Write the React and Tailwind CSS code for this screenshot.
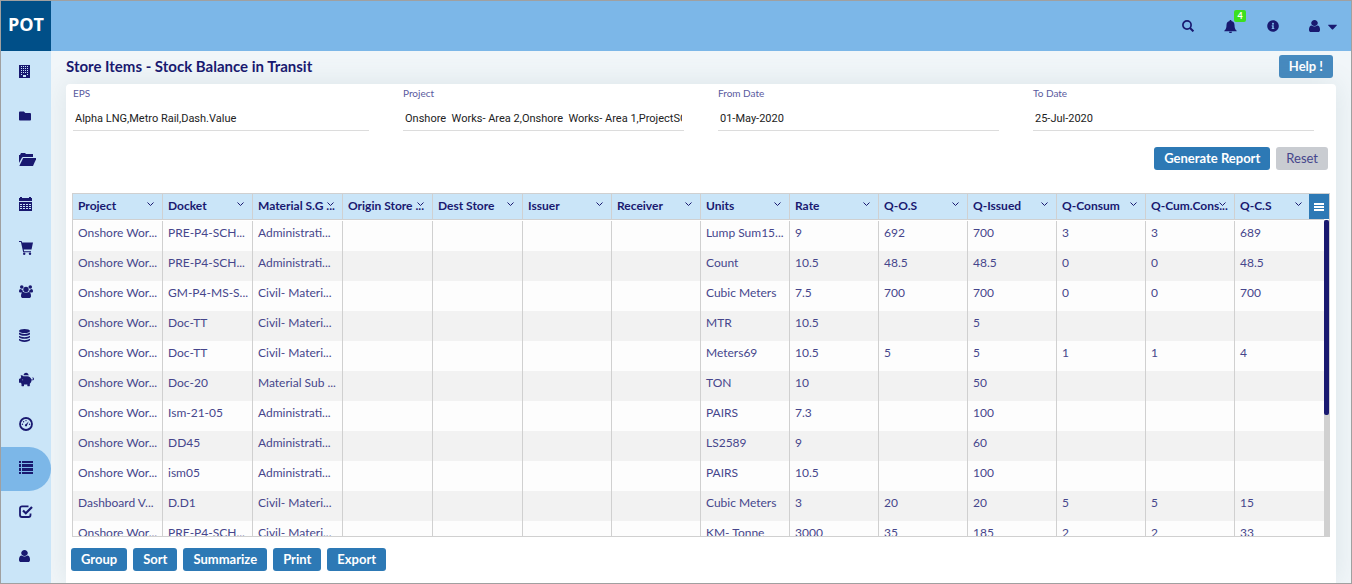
import React from "react";
import { FaInfoCircle, FaCaretDown, FaFolder, FaPiggyBank } from "react-icons/fa";

const BuildingIcon = () => (
  <svg viewBox="0 0 11 13" className="h-[13px] w-[11px]" fill="currentColor" shapeRendering="crispEdges">
    <path fillRule="evenodd" d="M0 0h11v13H0zM2 1v1h1V1zM4 1v1h1V1zM6 1v1h1V1zM8 1v1h1V1zM2 3v1h1V3zM4 3v1h1V3zM6 3v1h1V3zM8 3v1h1V3zM2 5v1h1V5zM4 5v1h1V5zM6 5v1h1V5zM8 5v1h1V5zM2 7v1h1V7zM4 7v1h1V7zM6 7v1h1V7zM8 7v1h1V7zM2 9v1h1V9zM8 9v1h1V9zM4 10v2h3v-2z" />
  </svg>
);

const FolderOpenIcon = () => (
  <svg viewBox="0 0 17 13" className="h-[13px] w-[17px]" fill="currentColor">
    <path d="M0 10V2h1l1-2h4l1 1h7v3H4L3 4.500z" />
    <path d="M4.200 5H17.500L14 13H.3z" />
  </svg>
);

const CalendarIcon = () => (
  <svg viewBox="0 0 13 14" className="h-[14px] w-[13px]" fill="currentColor" shapeRendering="crispEdges">
    <path fillRule="evenodd" d="M0 1h1V0h2v1h7V0h2v1h1v3H0zM0 5h13v9H0zM1 7v1h2V7zM4 7v1h2V7zM7 7v1h2V7zM10 7v1h2V7zM1 9v1h2V9zM4 9v1h2V9zM7 9v1h2V9zM10 9v1h2V9zM1 11v1h2v-1zM4 11v1h2v-1zM7 11v1h2v-1zM10 11v1h2v-1z" />
  </svg>
);

const CartIcon = () => (
  <svg viewBox="0 0 14 14" className="h-[14px] w-[14px]" fill="currentColor">
    <path d="M0 0h2.600l.5 1.500H14L12.500 8.500H4.700l.4 1.700H12v1H4.200L1.900 1H0z" />
    <circle cx="5.200" cy="12.700" r="1.200" />
    <circle cx="11" cy="12.700" r="1.200" />
  </svg>
);

const GroupIcon = () => (
  <svg viewBox="0 0 28 26" className="h-[13px] w-[14px]" fill="currentColor">
    <circle cx="5.500" cy="4" r="3.600" />
    <circle cx="22.500" cy="4" r="3.600" />
    <circle cx="14" cy="9" r="5.400" />
    <path d="M0 13c0-3 1-5 3-5l4 2c0 2 .5 3.500 2 5H3c-2 0-3-1-3-2zM28 13c0-3-1-5-3-5l-4 2c0 2-.5 3.500-2 5h6c2 0 3-1 3-2zM4 22c0-5 2-8 5-8 3 2 7 2 10 0 3 0 5 3 5 8 0 3-2 4-4 4H8c-2 0-4-1-4-4z" />
  </svg>
);

const DatabaseIcon = () => (
  <svg viewBox="0 0 11 13" className="h-[13px] w-[11px]" fill="currentColor">
    <ellipse cx="5.500" cy="2" rx="5.500" ry="2" />
    <path d="M0 3.600c2 1.900 9 1.900 11 0v1.300c0 2.400-11 2.400-11 0zM0 6.700c2 1.900 9 1.900 11 0V8c0 2.400-11 2.400-11 0zM0 9.800c2 1.900 9 1.900 11 0v1.300c0 2.400-11 2.400-11 0z" />
  </svg>
);

const GaugeIcon = () => (
  <svg viewBox="0 0 14 14" className="h-[14px] w-[14px]" fill="currentColor">
    <circle cx="7" cy="7" r="6" fill="none" stroke="currentColor" strokeWidth="1.800" />
    <path d="M9.800 4.200L7.900 8.600 6.300 7.800z" />
    <circle cx="7" cy="8.300" r="1.100" />
    <circle cx="3.400" cy="7.300" r=".7" />
    <circle cx="4.600" cy="4.700" r=".7" />
    <circle cx="7" cy="3.600" r=".7" />
    <circle cx="10.600" cy="7.300" r=".7" />
  </svg>
);

const ListIcon = () => (
  <svg viewBox="0 0 14 13" className="h-[13px] w-[14px]" fill="currentColor" shapeRendering="crispEdges">
    <path d="M0 0h2v2H0zM3 0h11v2H3zM0 3h2v3H0zM3 3h11v3H3zM0 7h2v3H0zM3 7h11v3H3zM0 11h2v2H0zM3 11h11v2H3z" />
  </svg>
);

const CheckIcon = () => (
  <svg viewBox="0 0 14 13" className="h-[13px] w-[14px]" fill="none" stroke="currentColor">
    <path d="M9.500 1.400H3A2 2 0 0 0 1 3.400V10a2 2 0 0 0 2 2h6.500a2 2 0 0 0 2-2V8.500" strokeWidth="1.800" />
    <path d="M4 5.500l2.800 2.800L13 2" strokeWidth="2.200" />
  </svg>
);

const UserIcon = () => (
  <svg viewBox="0 128 1280 1536" className="h-3 w-[11px]" preserveAspectRatio="none" fill="currentColor">
    <path d="M1280 1399q0 109-62.500 187t-150.500 78h-854q-88 0-150.500-78t-62.500-187q0-85 8.500-160.500t31.500-152 58.500-131 94-89 134.500-34.500q131 128 313 128t313-128q76 0 134.500 34.500t94 89 58.500 131 31.500 152 8.500 160.500zm-256-887q0 159-112.500 271.500t-271.500 112.500-271.500-112.500-112.500-271.500 112.500-271.500 271.500-112.500 271.500 112.500 112.500 271.500z" />
  </svg>
);

const SearchIcon = () => (
  <svg viewBox="0 0 12 12" className="h-3 w-3" fill="none" stroke="currentColor">
    <circle cx="5" cy="5" r="4.100" strokeWidth="1.700" />
    <path d="M8 8l3.400 3.400" strokeWidth="2" />
  </svg>
);

const BellIcon = () => (
  <svg viewBox="0 0 13 13" className="h-[13px] w-[13px]" fill="currentColor">
    <path d="M5.700 0h1.600v1C9.300 1.300 10.500 3 10.500 5c0 3 .7 4.400 2.200 5.700v.6H.3v-.6C1.800 9.400 2.500 8 2.500 5c0-2 1.200-3.700 3.200-4zM5 11.700h3c0 1-.6 1.300-1.500 1.300S5 12.700 5 11.700z" />
  </svg>
);

const MenuIcon = () => (
  <svg viewBox="0 0 10 8" className="h-2 w-[10px]" fill="currentColor" shapeRendering="crispEdges">
    <path d="M0 0h10v2H0zM0 3h10v2H0zM0 6h10v2H0z" />
  </svg>
);

const nav = [
  ["Buildings", <BuildingIcon />],
  ["Folder", <FaFolder size={12} />],
  ["Open folder", <FolderOpenIcon />],
  ["Calendar", <CalendarIcon />],
  ["Cart", <CartIcon />],
  ["Users", <GroupIcon />],
  ["Database", <DatabaseIcon />],
  ["Savings", <FaPiggyBank size={15} className="-scale-x-100" />],
  ["Dashboard", <GaugeIcon />],
  ["Reports", <ListIcon />],
  ["Approvals", <CheckIcon />],
  ["Profile", <UserIcon />],
];

const fields = [
  ["EPS", "Alpha LNG,Metro Rail,Dash.Value"],
  ["Project", "Onshore  Works- Area 2,Onshore  Works- Area 1,ProjectSG"],
  ["From Date", "01-May-2020"],
  ["To Date", "25-Jul-2020"],
];

const columns = [
  "Project", "Docket", "Material S.G ...", "Origin Store ...", "Dest Store", "Issuer", "Receiver",
  "Units", "Rate", "Q-O.S", "Q-Issued", "Q-Consum", "Q-Cum.Cons...", "Q-C.S",
];

const on = "Onshore Wor...";
const adm = "Administrati...";
const civ = "Civil- Materi...";
const rows = [
  [on, "PRE-P4-SCH...", adm, "", "", "", "", "Lump Sum15...", "9", "692", "700", "3", "3", "689"],
  [on, "PRE-P4-SCH...", adm, "", "", "", "", "Count", "10.5", "48.5", "48.5", "0", "0", "48.5"],
  [on, "GM-P4-MS-S...", civ, "", "", "", "", "Cubic Meters", "7.5", "700", "700", "0", "0", "700"],
  [on, "Doc-TT", civ, "", "", "", "", "MTR", "10.5", "", "5", "", "", ""],
  [on, "Doc-TT", civ, "", "", "", "", "Meters69", "10.5", "5", "5", "1", "1", "4"],
  [on, "Doc-20", "Material Sub ...", "", "", "", "", "TON", "10", "", "50", "", "", ""],
  [on, "Ism-21-05", adm, "", "", "", "", "PAIRS", "7.3", "", "100", "", "", ""],
  [on, "DD45", adm, "", "", "", "", "LS2589", "9", "", "60", "", "", ""],
  [on, "ism05", adm, "", "", "", "", "PAIRS", "10.5", "", "100", "", "", ""],
  ["Dashboard V...", "D.D1", civ, "", "", "", "", "Cubic Meters", "3", "20", "20", "5", "5", "15"],
  [on, "PRE-P4-SCH...", civ, "", "", "", "", "KM- Tonne", "3000", "35", "185", "2", "2", "33"],
];

function Button({ children, className = "bg-[#2d79b5] text-white font-bold" }) {
  return (
    <button type="button" className={`h-[23px] whitespace-nowrap rounded-[3px] px-[10px] text-[13px] leading-[23px] ${className}`}>
      {children}
    </button>
  );
}

function Header() {
  return (
    <header className="flex h-[50px] shrink-0 bg-[#7cb7e8] text-[#191970]">
      <a href="#home" className="flex w-[50px] items-center justify-center bg-[#004f88] pb-[3px] font-['Open_Sans',sans-serif] text-[18px] font-bold text-white">
        POT
      </a>
      <div className="flex flex-1 items-center justify-end gap-[30px] pr-[11px]">
        <button type="button" aria-label="Search"><SearchIcon /></button>
        <button type="button" aria-label="Notifications" className="relative">
          <BellIcon />
          <span className="absolute -top-[10px] left-[10px] flex h-3 w-3 items-center justify-center rounded-[2px] bg-[#3be01f] text-[9px] font-bold leading-none text-white">4</span>
        </button>
        <button type="button" aria-label="Information"><FaInfoCircle size={12} /></button>
        <button type="button" aria-label="Account" className="flex items-center gap-[5px]"><UserIcon /><FaCaretDown size={15} /></button>
      </div>
    </header>
  );
}

function Sidebar() {
  return (
    <nav className="w-[50px] shrink-0 bg-[#cae5f8] text-[#191970]">
      {nav.map(([label, icon]) => (
        <a
          key={label}
          href="#nav"
          aria-label={label}
          className={`flex h-11 items-center pb-[3px] pl-[18px] ${label === "Reports" ? "rounded-r-full bg-[#7cb7e8]" : ""}`}
        >
          {icon}
        </a>
      ))}
    </nav>
  );
}

function Chevron() {
  return (
    <svg viewBox="0 0 7 5" className="h-[5px] w-[7px]" fill="none" stroke="currentColor">
      <path d="M.5.5l3 3 3-3" />
    </svg>
  );
}

function StockTable() {
  return (
    <div className="relative mr-[3px] -ml-px h-[344px] overflow-hidden border border-[#d0d0d0]">
      <div className="flex h-full">
        <div className="min-w-0 flex-1">
          <table className="w-full table-fixed border-separate border-spacing-0 text-left text-[12px]">
            <colgroup>
              {columns.map((c, i) => <col key={c} className={i < 5 ? "w-[90px]" : ""} />)}
            </colgroup>
            <thead>
              <tr>
                {columns.map((c, i) => (
                  <th key={c} className="p-0 pb-px text-[#191970]">
                    <div className="relative flex h-[26px] items-center whitespace-nowrap border-r border-b border-[#d0d0d0] bg-[#cae5f8] pb-px pl-[5px]">
                      {c}
                      <button
                        type="button"
                        aria-label={`${c} menu`}
                        className={`absolute top-[8px] ${i === columns.length - 1 ? "right-[21px]" : "right-[8px]"}`}
                      >
                        <Chevron />
                      </button>
                    </div>
                  </th>
                ))}
              </tr>
            </thead>
            <tbody>
              {rows.map((r, i) => (
                <tr key={i} className="odd:bg-[#fdfdfd] even:bg-[#f2f2f2]">
                  {r.map((v, j) => (
                    <td key={j} className="h-[30px] whitespace-nowrap border-r border-[#d0d0d0] p-0 pl-[5px] align-top leading-6 text-[#46468c] last:border-r-0">
                      {v}
                    </td>
                  ))}
                </tr>
              ))}
            </tbody>
          </table>
        </div>
        <div className="mt-[26px] w-[5px] bg-[#d0d0d0]">
          <div className="h-[195px] rounded-[2px] bg-[#191970]" />
        </div>
      </div>
      <button type="button" aria-label="Grid menu" className="absolute top-0 right-0 flex h-[25px] w-5 items-center justify-center bg-[#2d79b5] text-white">
        <MenuIcon />
      </button>
    </div>
  );
}

export default function App() {
  return (
    <div className="flex min-h-screen flex-col border border-[#a0a0a0] bg-[#f1f6f9] font-['Lato',sans-serif]">
      <Header />
      <div className="flex flex-1">
        <Sidebar />
        <main className="flex min-w-0 flex-1 flex-col overflow-hidden px-[15px]">
          <div className="flex h-[33px] shrink-0 items-center justify-between pr-[3px] pb-[2px]">
            <h1 className="text-[15px] font-bold text-[#191970]">Store Items - Stock Balance in Transit</h1>
            <Button className="bg-[#478abf] font-bold text-white">Help !</Button>
          </div>
          <section className="flex-1 rounded-t-[4px] bg-white pr-[3px] pl-[7px] shadow-[0_0_28px_rgba(82,120,130,0.14)]">
            <form>
              <div className="grid grid-cols-4">
                {fields.map(([label, value]) => (
                  <div key={label} className="pt-[2px] pr-[19px] pl-[15px] first:pl-0">
                    <label htmlFor={label} className="block text-[10px] leading-[14px] text-[#5a5a9e]">{label}</label>
                    <input
                      id={label}
                      defaultValue={value}
                      className="mt-[6px] block h-[25px] w-full border-b border-[#dcdcdc] bg-transparent px-[2px] font-['Roboto',sans-serif] text-[11px] text-[#222]"
                    />
                  </div>
                ))}
              </div>
              <div className="mt-4 flex justify-end gap-[6px] pr-[5px]">
                <Button>Generate Report</Button>
                <Button className="bg-[#c9ccd1] text-[#46468c]">Reset</Button>
              </div>
            </form>
            <div className="mt-[23px]"><StockTable /></div>
            <div className="mt-[11px] -ml-[2px] flex gap-[6px]">
              {["Group", "Sort", "Summarize", "Print", "Export"].map((b) => <Button key={b}>{b}</Button>)}
            </div>
          </section>
        </main>
      </div>
    </div>
  );
}
